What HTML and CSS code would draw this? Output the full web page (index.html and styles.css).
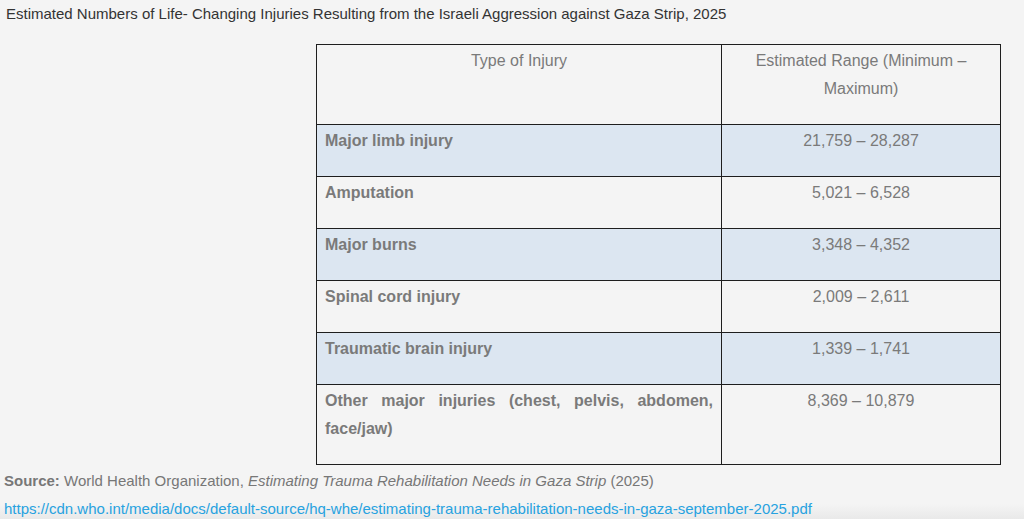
FILE: index.html
```html
<!DOCTYPE html>
<html>
<head>
<meta charset="utf-8">
<link rel="stylesheet" href="styles.css">
</head>
<body>
<div class="page">
  <p class="title">Estimated Numbers of Life- Changing Injuries Resulting from the Israeli Aggression against Gaza Strip, 2025</p>
  <div class="table-wrap">
    <table class="injuries">
      <thead>
        <tr><th class="c1">Type of Injury</th><th class="c2">Estimated Range (Minimum – Maximum)</th></tr>
      </thead>
      <tbody>
        <tr class="shade"><td class="c1">Major limb injury</td><td class="c2">21,759 – 28,287</td></tr>
        <tr><td class="c1">Amputation</td><td class="c2">5,021 – 6,528</td></tr>
        <tr class="shade"><td class="c1">Major burns</td><td class="c2">3,348 – 4,352</td></tr>
        <tr><td class="c1">Spinal cord injury</td><td class="c2">2,009 – 2,611</td></tr>
        <tr class="shade"><td class="c1">Traumatic brain injury</td><td class="c2">1,339 – 1,741</td></tr>
        <tr><td class="c1">Other major injuries (chest, pelvis, abdomen, face/jaw)</td><td class="c2">8,369 – 10,879</td></tr>
      </tbody>
    </table>
  </div>
  <p class="source"><strong>Source:</strong> World Health Organization, <em>Estimating Trauma Rehabilitation Needs in Gaza Strip</em> (2025)</p>
  <p class="link"><a href="#">https://cdn.who.int/media/docs/default-source/hq-whe/estimating-trauma-rehabilitation-needs-in-gaza-september-2025.pdf</a></p>
</div>
</body>
</html>
```
FILE: styles.css
```css
html, body {
  margin: 0;
  padding: 0;
  overflow: hidden;
}
body {
  font-family: "Liberation Sans", Arial, sans-serif;
  font-size: 15px;
  line-height: 28px;
  color: #666;
  height: 519px;
  background: linear-gradient(to bottom, #f4f4f4 0, #f4f4f4 504px, #e9e9e9 519px);
}
.page {
  padding: 0 4px;
}
p { margin: 0; }
.title {
  color: #333;
  padding-left: 2px;
  margin-bottom: 16px;
}
.table-wrap {
  padding-left: 312px;
}
.injuries {
  border-collapse: collapse;
  width: 685px;
  font-size: 16px;
}
.injuries th, .injuries td {
  border: 1px solid #1e1e1e;
  padding: 2px 8px 21px;
  vertical-align: top;
  color: #7a7a7a;
  line-height: 28px;
}
.injuries th {
  font-weight: normal;
  text-align: center;
}
.injuries .c1 { width: 388px; }
.injuries td.c1 {
  font-weight: bold;
  text-align: justify;
}
.injuries td.c2 { text-align: center; }
.injuries tr.shade td { background: #dce6f1; }
.source {
  margin-top: 2px;
  color: #777;
}
.source strong { color: #777; }
.link a {
  color: #27a2e0;
  text-decoration: none;
}
```
